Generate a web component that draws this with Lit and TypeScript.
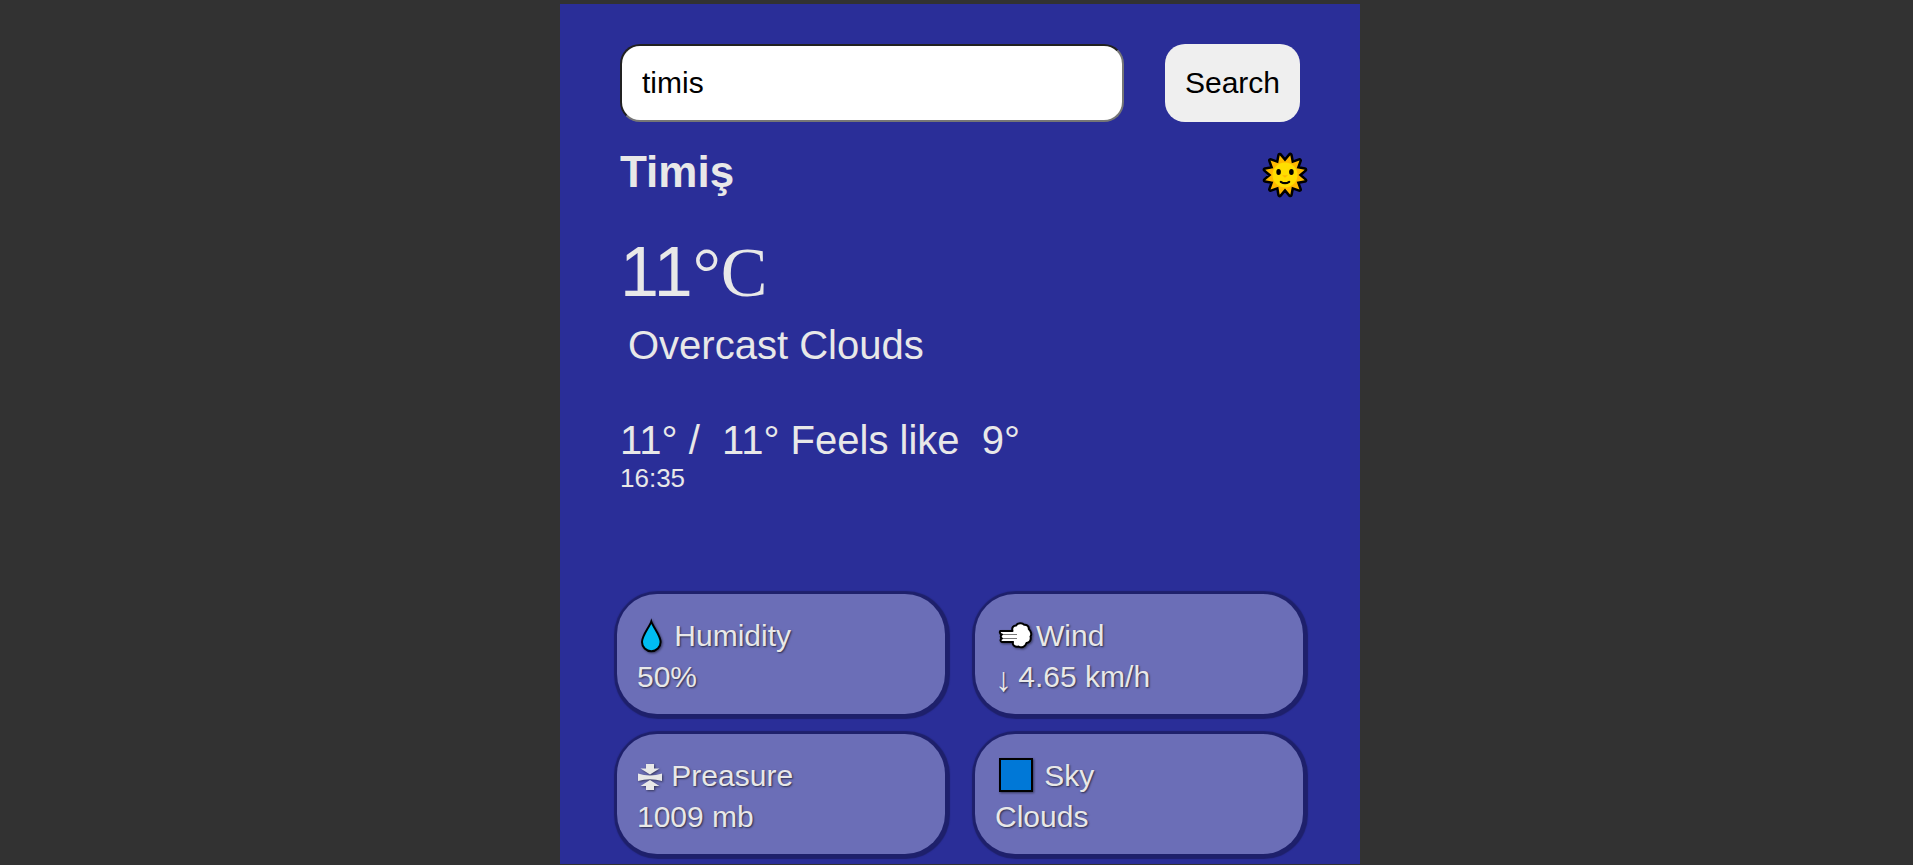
import { LitElement, html, css, svg } from "lit";
import { customElement, property, state } from "lit/decorators.js";

const sunRays = Array.from({ length: 24 }, (_, i) => {
  const angle = (i * 15 * Math.PI) / 180;
  const radius = i % 2 === 0 ? 13.5 : 20.5;
  return `${(23 + radius * Math.sin(angle)).toFixed(1)},${(23 - radius * Math.cos(angle)).toFixed(1)}`;
}).join(" ");

const sunIcon = html`<svg class="sun" width="46" height="46" viewBox="0 0 46 46" role="img" aria-label="Sunny">
  <polygon points=${sunRays} fill="#000" stroke="#000" stroke-width="5" stroke-linejoin="round" />
  <polygon points=${sunRays} fill="#ffb900" />
  <circle cx="23" cy="23" r="12.5" fill="#ffde00" />
  <ellipse cx="16.6" cy="20" rx="2.3" ry="3" fill="#000" />
  <ellipse cx="29.4" cy="20" rx="2.3" ry="3" fill="#000" />
  <path d="M20 23.2h6l-3 2.6z" fill="#ffb900" />
  <path d="M18.8 29.8q4.2 2.8 8.4 0" fill="none" stroke="#000" stroke-width="2.2" stroke-linecap="round" />
</svg>`;

const dropIcon = svg`<svg width="29" height="41" viewBox="0 1 29 41" aria-hidden="true">
  <path d="M14.3 7.5C12.5 13 5 21.5 5 28A9.3 9.3 0 0 0 23.6 28C23.6 21.5 16 13 14.3 7.5Z" fill="#00bcf2" stroke="#000" stroke-width="2" stroke-miterlimit="8" />
</svg>`;

const windIcon = svg`<svg width="41" height="41" viewBox="0 1 41 41" aria-hidden="true">
  <path d="M5.500 17H17.500C16.500 13.500 18.500 11.500 21 11.500C22.500 8.500 27.500 8.500 29 10.800C32 10.500 34 12.500 33.800 15C36 17 37 20.500 35.500 22.500C36.500 26 34.500 28.800 31.500 29C30.500 32.500 26.500 34.500 23.500 32.500C20 33.500 17 31 18 28H7C5 27.500 5 25 7 24.500C5.300 23.500 5.300 21.500 7 20.500C4.500 20 4.500 17.500 5.500 17Z" fill="#fff" stroke="#000" stroke-width="2" stroke-linejoin="round" />
  <path d="M8 20.500H22M8 24.500H22" stroke="#777" stroke-width="1" fill="none" />
</svg>`;

const pressureIcon = svg`<svg width="26" height="41" viewBox="0 1 26 41" aria-hidden="true">
  <path fill="#e8e8e8" d="M9 10h8v4.500h5.500L13 20.500L3.500 14.500H9ZM1 19.500Q13 23.500 25 19.500V27Q13 23.500 1 27ZM13 26L22.500 32H17v4H9v-4H3.500Z" />
</svg>`;

const skyIcon = svg`<svg width="41" height="41" viewBox="0 1 41 41" aria-hidden="true">
  <rect x="5" y="5" width="32" height="32" fill="#0078d7" stroke="#000" stroke-width="2" />
</svg>`;

@customElement("weather-card")
class WeatherCard extends LitElement {
  @property({ attribute: false }) icon: unknown;
  @property() label = "";
  @property() arrow = "";
  @property() value = "";

  static styles = css`
    :host {
      display: block;
      padding: 21px 20px 17px;
      border-radius: 40px;
      background: #6b6eb7;
      box-shadow: 1px 1px 1px 4px #1e206b;
      color: #e8e8e8;
      font-size: 30px;
      line-height: 41px;
      text-shadow: 1px 1px 2px rgba(0, 0, 0, 0.6);
    }
    .line {
      margin: 0;
      white-space: pre;
    }
    .line svg {
      vertical-align: top;
      filter: drop-shadow(1px 1px 1px rgba(0, 0, 0, 0.5));
    }
    .arrow {
      display: inline-block;
      width: 15px;
      font-family: "Liberation Serif", serif;
      font-size: 34px;
      line-height: 24px;
      vertical-align: -4px;
    }
  `;

  render() {
    return html`
      <p class="line">${this.icon}${this.label}</p>
      <p class="line">${this.arrow ? html`<span class="arrow">${this.arrow}</span>` : ""}${this.value}</p>
    `;
  }
}

@customElement("app-root")
class AppRoot extends LitElement {
  @state() query = "timis";

  static styles = css`
    :host {
      display: block;
      box-sizing: border-box;
      min-height: 100vh;
      padding: 4px 0 0 7px;
      background: #323232;
      color: #e8e8e8;
      font-family: "Liberation Sans", Arial, sans-serif;
    }
    .panel {
      box-sizing: border-box;
      max-width: 800px;
      margin: 0 auto;
      padding: 40px 60px 10px;
      background: #2a2e98;
    }
    .search {
      display: flex;
      gap: 41px;
    }
    .field,
    .submit {
      box-sizing: border-box;
      padding: 20px;
      border-radius: 20px;
      font: inherit;
      font-size: 30px;
      line-height: 34px;
      color: #000;
    }
    .field {
      flex: 1;
      min-width: 0;
      height: 78px;
      border: 2px inset #767676;
      background: #fff;
    }
    .submit {
      border: 0;
      background: #efefef;
    }
    .heading {
      display: flex;
      justify-content: space-between;
      align-items: end;
      margin: 24px -8px 0 0;
    }
    .place {
      margin: 0;
      font-size: 44px;
      line-height: 52px;
    }
    .text {
      margin: 0;
      font-size: 40px;
      line-height: 46px;
      white-space: pre-wrap;
    }
    .temperature {
      margin: 34px 0 10px;
      font-size: 70px;
      line-height: 80px;
    }
    .unit {
      font-family: "Liberation Serif", serif;
      line-height: 1;
    }
    .summary {
      padding-left: 8px;
      margin-bottom: 49px;
    }
    .time {
      display: block;
      font-size: 26px;
      line-height: 30px;
    }
    .cards {
      display: grid;
      grid-template-columns: 1fr 1fr;
      gap: 20px 30px;
      margin: 101px -3px 0;
    }
  `;

  private onInput(event: Event) {
    this.query = (event.target as HTMLInputElement).value;
  }

  render() {
    return html`
      <main class="panel">
        <form class="search" @submit=${(e: Event) => e.preventDefault()}>
          <input class="field" type="text" aria-label="City" .value=${this.query} @input=${this.onInput} />
          <button class="submit" type="submit">Search</button>
        </form>
        <header class="heading">
          <h1 class="place">Timiş</h1>
          ${sunIcon}
        </header>
        <p class="temperature">11<span class="unit">°C</span></p>
        <p class="text summary">Overcast Clouds</p>
        <p class="text">11° /  11° Feels like  9°</p>
        <time class="time">16:35</time>
        <section class="cards">
          <weather-card .icon=${dropIcon} label=" Humidity" value="50%"></weather-card>
          <weather-card .icon=${windIcon} label="Wind" arrow="↓" value=" 4.65 km/h"></weather-card>
          <weather-card .icon=${pressureIcon} label=" Preasure" value="1009 mb"></weather-card>
          <weather-card .icon=${skyIcon} label=" Sky" value="Clouds"></weather-card>
        </section>
      </main>
    `;
  }
}
